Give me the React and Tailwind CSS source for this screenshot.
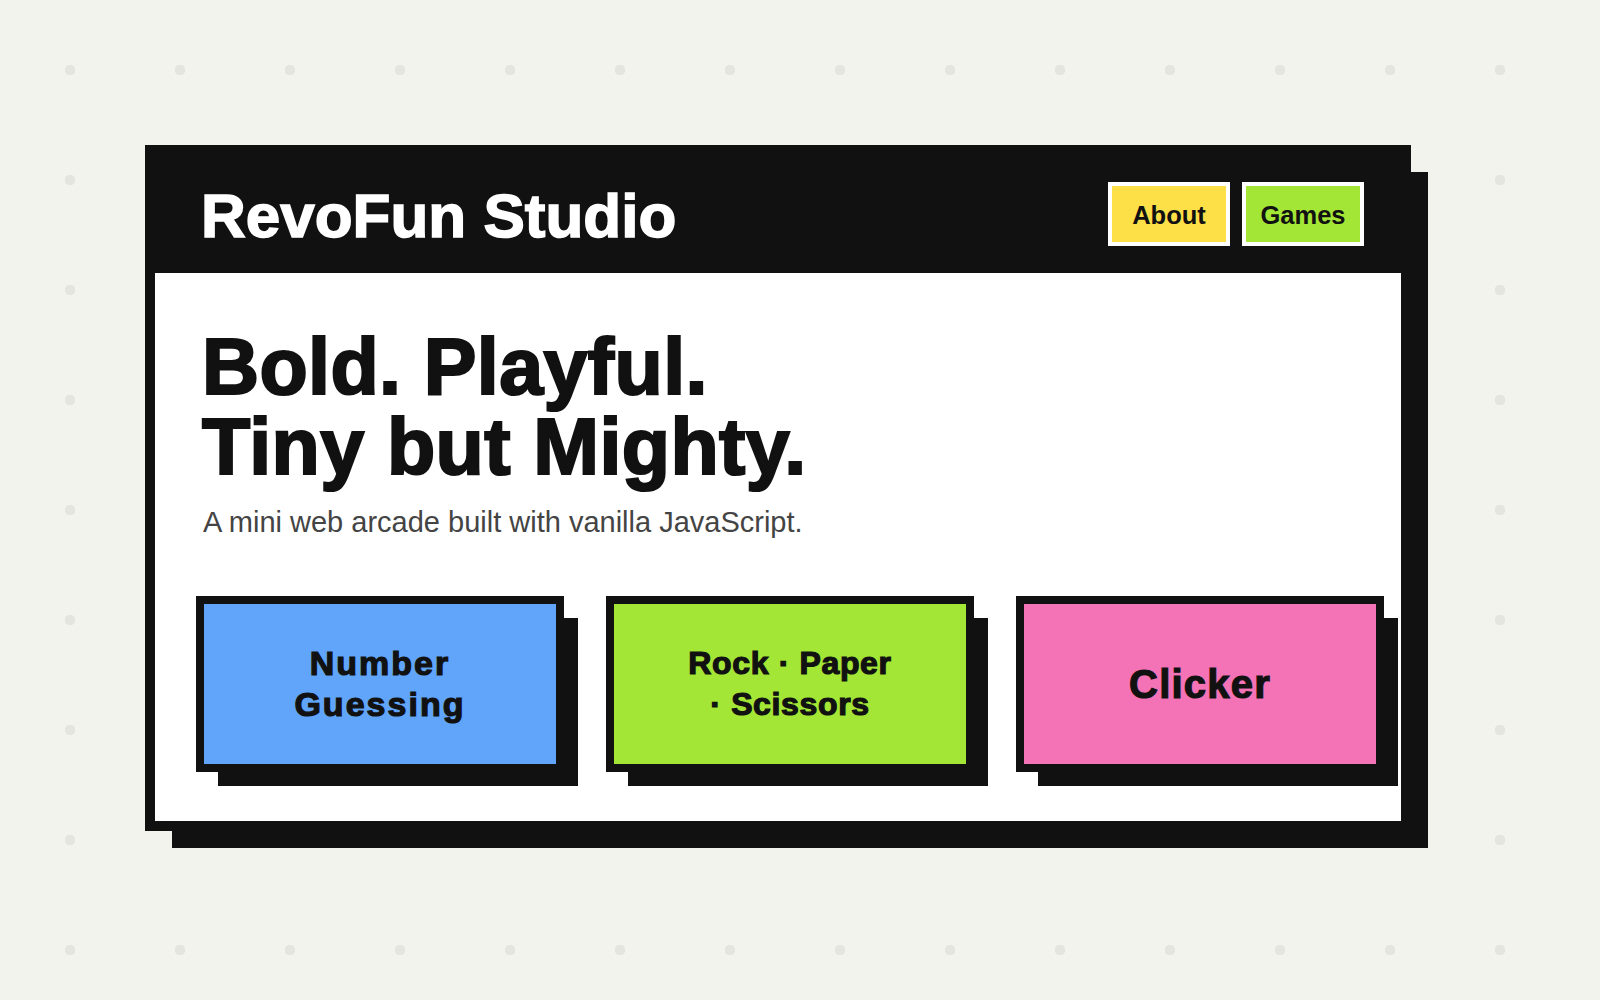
import React from "react";

const games = [
  { id: "number", lines: ["Number", "Guessing"], bg: "bg-[#60a5fa]", size: "text-[34px] leading-[41px] tracking-[0.06em]" },
  { id: "rps", lines: ["Rock · Paper", "· Scissors"], bg: "bg-[#a3e635]", size: "text-[32px] leading-[41px] tracking-[0.02em]" },
  { id: "clicker", lines: ["Clicker"], bg: "bg-[#f472b6]", size: "text-[40px] leading-[46px] tracking-[0.03em]" },
];

function GameCard({ game }) {
  return (
    <button
      className={`w-[368px] h-[176px] border-[8px] border-[#111] ${game.bg} shadow-[18px_18px_0_-4px_#111] flex flex-col items-center justify-center text-center font-bold text-[#111] [-webkit-text-stroke:1.2px_#111] ${game.size}`}
    >
      {game.lines.map((line) => (
        <span key={line} className="block">
          {line}
        </span>
      ))}
    </button>
  );
}

export default function App() {
  return (
    <div
      className="w-full h-[1000px] bg-[#f3f3ee] [background-image:radial-gradient(circle,#e5e5df_5px,transparent_5.5px)] [background-size:110px_110px] [background-position:15px_15px] pt-[145px] pl-[145px] font-['Liberation_Sans',Arial,sans-serif]"
    >
      <div className="w-[1266px] h-[686px] border-[10px] border-[#111] bg-white shadow-[22px_22px_0_-5px_#111] flex flex-col">
        {/* Header */}
        <header className="h-[118px] bg-[#111] flex items-center justify-between pl-[46px] pr-[37px]">
          <h1 className="text-white font-bold text-[62px] leading-none mt-[3px] [-webkit-text-stroke:1.5px_#fff]">
            RevoFun Studio
          </h1>
          <nav className="flex gap-[12px]">
            <a className="w-[122px] h-[64px] border-[4px] border-white bg-[#fde047] flex items-center justify-center font-bold text-[25.5px] text-[#111] pt-[2px]">
              About
            </a>
            <a className="w-[122px] h-[64px] border-[4px] border-white bg-[#a3e635] flex items-center justify-center font-bold text-[25.5px] text-[#111] pt-[2px]">
              Games
            </a>
          </nav>
        </header>

        {/* Hero */}
        <main className="pl-[41px] pt-[54px]">
          <h2 className="font-bold text-[79px] leading-[80px] text-[#111] pl-[6px] tracking-[0.005em] [-webkit-text-stroke:2.2px_#111]">
            Bold. Playful.
            <br />
            Tiny but Mighty.
          </h2>
          <p className="mt-[14px] pl-[7px] text-[29px] text-[#444]">
            A mini web arcade built with vanilla JavaScript.
          </p>

          <div className="mt-[51px] flex gap-[42px]">
            {games.map((g) => (
              <GameCard key={g.id} game={g} />
            ))}
          </div>
        </main>
      </div>
    </div>
  );
}
